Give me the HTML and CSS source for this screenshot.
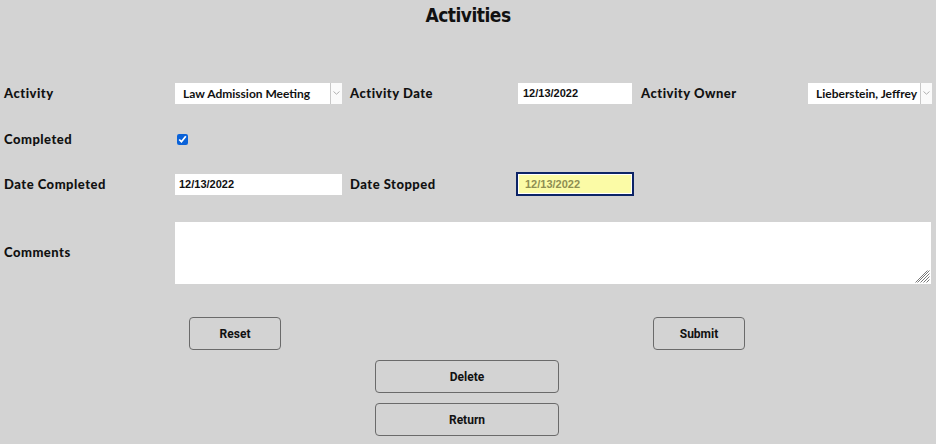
FILE: index.html
```html
<!DOCTYPE html>
<html>
<head>
<meta charset="utf-8">
<link rel="stylesheet" href="styles.css">
</head>
<body>
<h1 class="title">Activities</h1>
<div class="form">
  <div class="row r1">
    <div class="label first">Activity</div>
    <div class="cell c2">
      <div class="select w1"><span class="sel-text">Law Admission Meeting</span><span class="arrow"><svg width="7" height="4" viewBox="0 0 7 4"><path d="M0.5 0.5 L3.5 3.2 L6.5 0.5" fill="none" stroke="#b0b0b0" stroke-width="1"/></svg></span></div>
    </div>
    <div class="label">Activity Date</div>
    <div class="cell c4"><div class="input w2">12/13/2022</div></div>
    <div class="label">Activity Owner</div>
    <div class="cell">
      <div class="select w3"><span class="sel-text">Lieberstein, Jeffrey</span><span class="arrow"><svg width="7" height="4" viewBox="0 0 7 4"><path d="M0.5 0.5 L3.5 3.2 L6.5 0.5" fill="none" stroke="#b0b0b0" stroke-width="1"/></svg></span></div>
    </div>
  </div>
  <div class="row r2">
    <div class="label first">Completed</div>
    <div class="cell c2"><input type="checkbox" class="check" checked></div>
  </div>
  <div class="row r3">
    <div class="label first">Date Completed</div>
    <div class="cell c2"><div class="input w4">12/13/2022</div></div>
    <div class="label">Date Stopped</div>
    <div class="cell c4"><div class="input stopped">12/13/2022</div></div>
  </div>
  <div class="row r4">
    <div class="label first">Comments</div>
    <div class="cell wide">
      <div class="ta-wrap">
        <textarea class="comments"></textarea>
        <svg class="grip" width="15" height="15" viewBox="0 0 15 15"><path d="M14.5 2.5 L2.5 14.5 M14.5 5.5 L5.5 14.5 M14.5 8.5 L8.5 14.5 M14.5 11.5 L11.5 14.5 M12.5 2.5 L0.5 14.5" stroke="#7a7a7a" stroke-width="1" fill="none"/></svg>
      </div>
    </div>
  </div>
</div>
<div class="buttons top">
  <button class="btn reset">Reset</button>
  <button class="btn submit">Submit</button>
</div>
<div class="buttons stack">
  <button class="btn big">Delete</button>
  <button class="btn big">Return</button>
</div>
</body>
</html>
```
FILE: styles.css
```css
html, body {
  margin: 0;
  padding: 0;
  background: #d3d3d3;
  width: 936px;
  height: 444px;
  overflow: hidden;
}
body {
  font-family: "Lato", "DejaVu Sans", sans-serif;
  color: #111;
}
.title {
  margin: 0;
  height: 70px;
  padding-top: 4px;
  box-sizing: border-box;
  text-align: center;
  font-family: "DejaVu Sans Condensed", "DejaVu Sans", sans-serif;
  font-stretch: condensed;
  font-weight: bold;
  font-size: 19px;
  letter-spacing: -0.5px;
}
.row {
  display: grid;
  grid-template-columns: 175px 175px 168px 123px 167px 1fr;
  align-items: center;
}
.r1 { height: 46px; }
.r2 { height: 46px; }
.r3 { height: 44px; }
.r4 { height: 62px; margin-top: 16px; }
.label {
  font-weight: 900;
  font-size: 13px;
  letter-spacing: 0.5px;
  white-space: nowrap;
}
.first { padding-left: 4px; }
.r4 .label { padding-bottom: 2px; }
.cell { display: flex; align-items: center; }
.wide { grid-column: 2 / 7; height: 62px; }
.select {
  display: flex;
  height: 21px;
  background: #fff;
  box-sizing: border-box;
}
.w1 { width: 167px; }
.w3 { width: 124px; }
.sel-text {
  flex: 1;
  padding-left: 8px;
  font-size: 12px;
  font-weight: bold;
  line-height: 22px;
  white-space: nowrap;
  overflow: hidden;
}
.arrow {
  width: 12px;
  border-left: 1px solid #c8c8c8;
  background: #fafafa;
  display: flex;
  justify-content: center;
  padding-top: 8px;
  box-sizing: border-box;
}
.input {
  height: 21px;
  background: #fff;
  box-sizing: border-box;
  padding-left: 5px;
  font-family: "Liberation Sans", Arial, sans-serif;
  font-weight: bold;
  font-size: 11px;
  line-height: 21px;
}
.w2 { width: 114px; }
.w4 { width: 167px; padding-left: 4px; }
.stopped {
  width: 118px;
  height: 24px;
  margin-left: -2px;
  border: 2px solid #0c2466;
  background: #fbfba6;
  color: #8e8e52;
  padding-left: 7px;
  line-height: 20px;
  box-shadow: inset 0 0 0 1px #fff;
}
.check {
  margin: 0 0 0 2px;
  width: 11px;
  height: 11px;
  accent-color: #0a62d8;
}
.ta-wrap {
  position: relative;
  width: 756px;
  height: 62px;
}
.comments {
  display: block;
  width: 756px;
  height: 62px;
  margin: 0;
  border: none;
  box-sizing: border-box;
  background: #fff;
  resize: none;
  outline: none;
}
.grip {
  position: absolute;
  right: 1px;
  bottom: 1px;
}
.buttons {
  display: flex;
}
.top {
  margin-top: 33px;
  padding-left: 189px;
  gap: 372px;
}
.stack {
  flex-direction: column;
  align-items: flex-start;
  padding-left: 375px;
  margin-top: 10px;
  gap: 10px;
}
.btn {
  width: 92px;
  height: 33px;
  background: #d3d3d3;
  border: 1px solid #6a6a6a;
  border-radius: 4px;
  font-family: "Roboto", sans-serif;
  font-weight: bold;
  font-size: 12px;
  color: #111;
  padding: 0;
}
.big { width: 184px; }
```
